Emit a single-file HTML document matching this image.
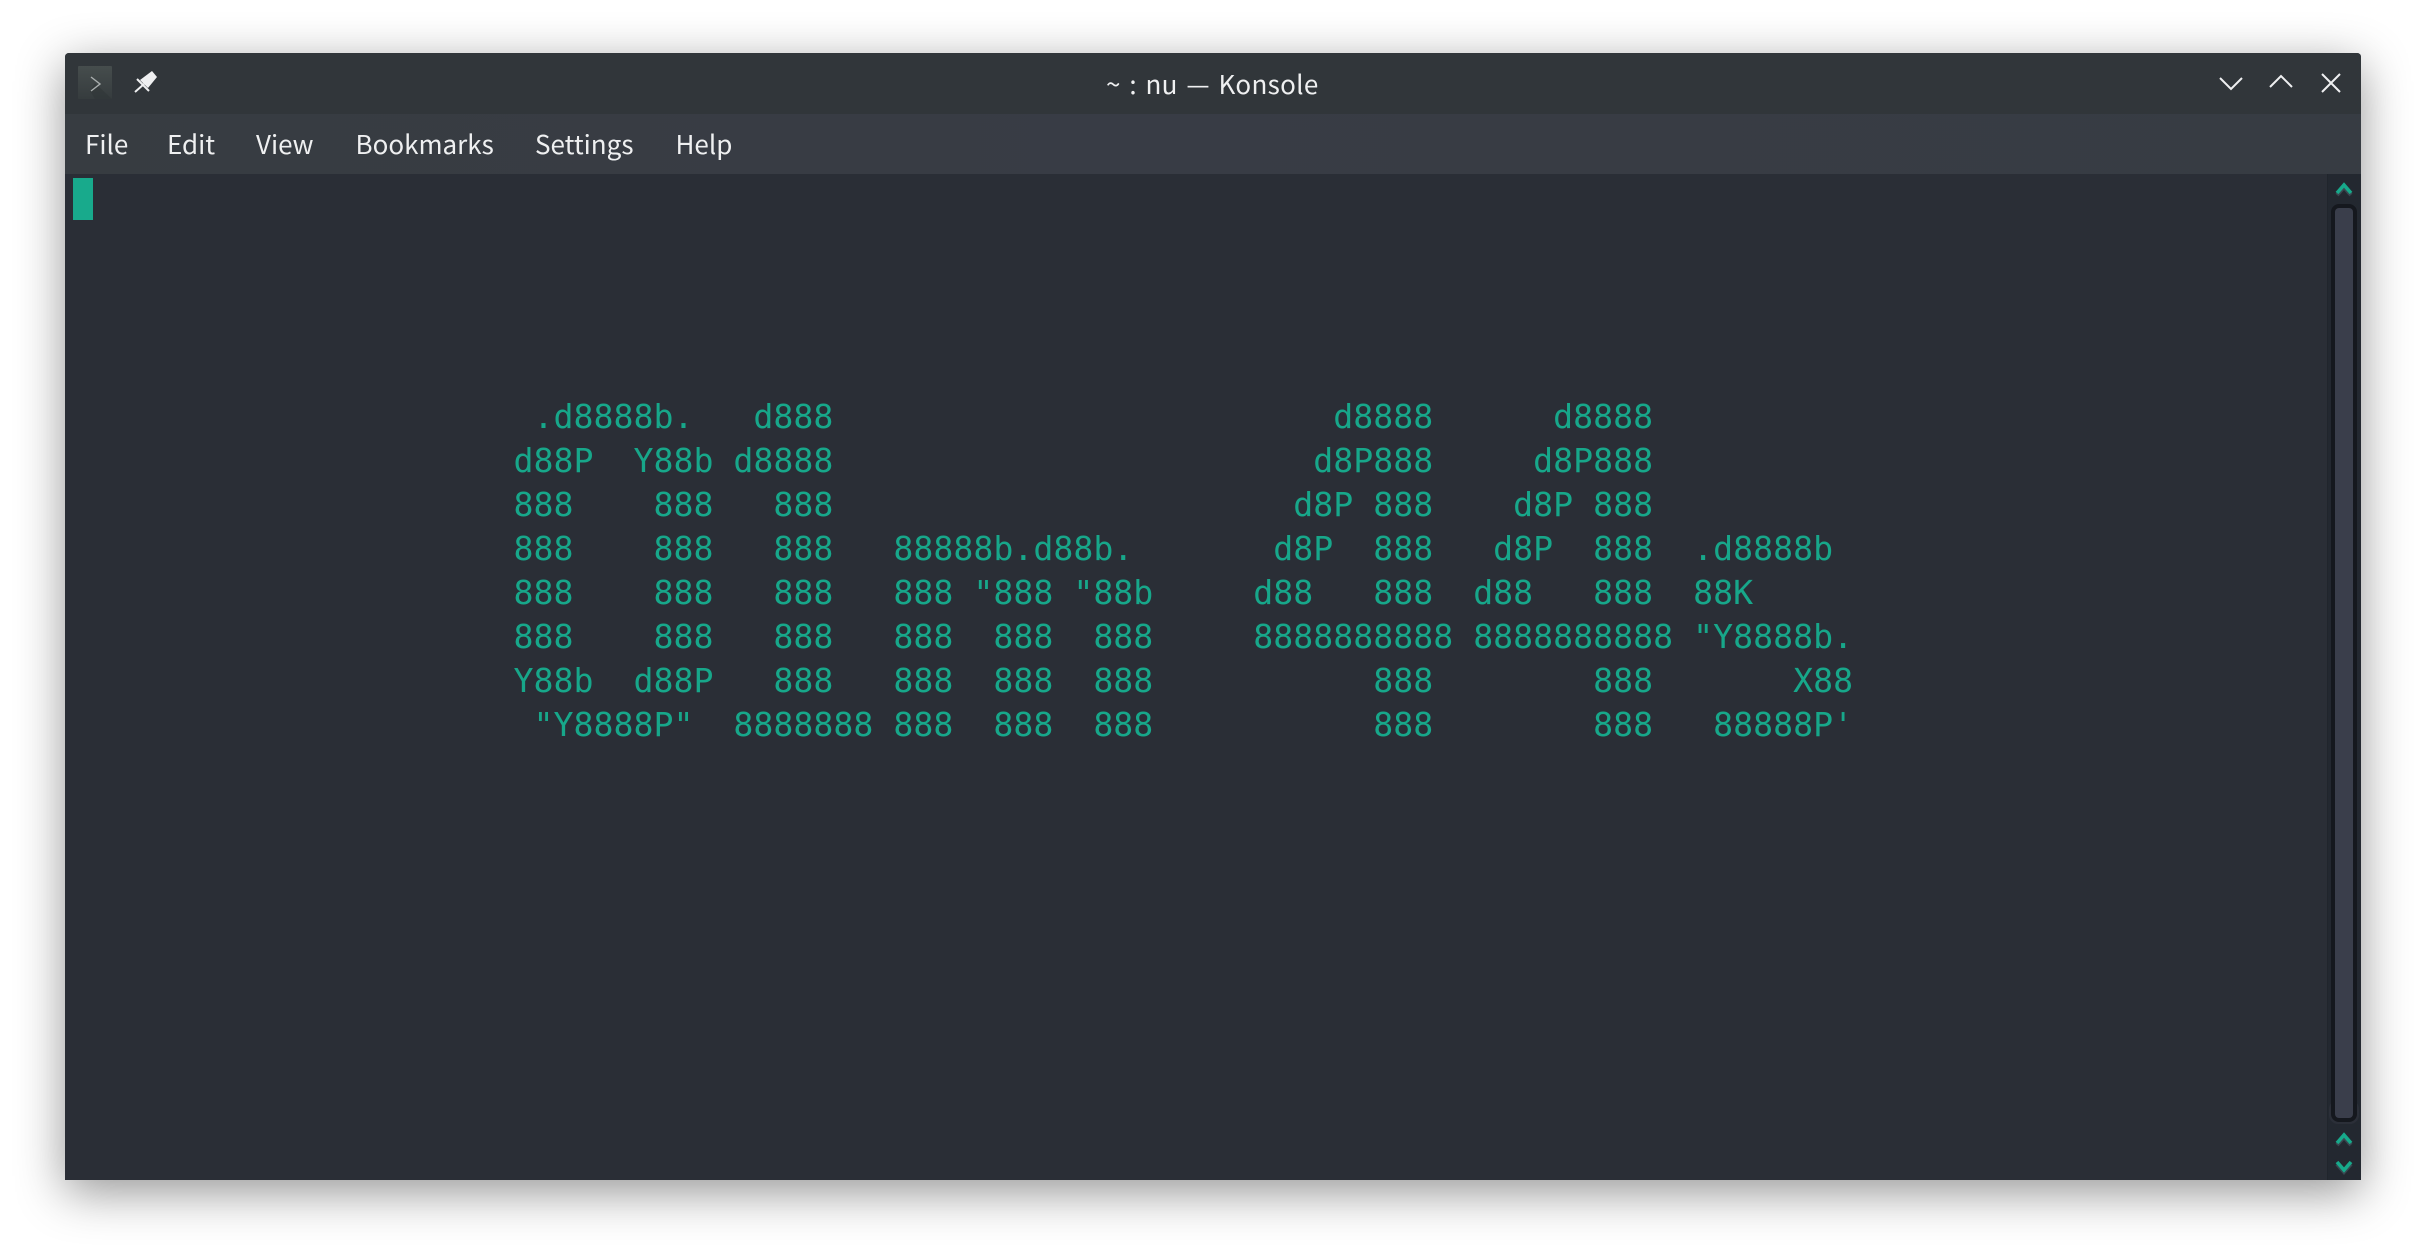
<!DOCTYPE html>
<html><head><meta charset="utf-8"><style>
html,body{margin:0;padding:0;width:2426px;height:1257px;background:#fff;overflow:hidden}
.win{position:absolute;left:65px;top:53px;width:2296px;height:1127px;background:#2a2e36;border-radius:4px 4px 0 0;box-shadow:0 12px 48px rgba(0,0,0,.42)}
.tb{position:absolute;left:0;top:0;width:2296px;height:61px;background:#31363a;border-radius:4px 4px 0 0}
.mb{position:absolute;left:0;top:61px;width:2296px;height:60px;background:linear-gradient(90deg,#373c41 0%,#383c45 45%,#373c43 100%)}
.ui{position:absolute;font-family:"Noto Sans CJK JP","Liberation Sans",sans-serif;font-size:26px;line-height:36px;color:#eff0f1;white-space:pre}
pre{position:absolute;left:513.500px;top:395px;margin:0;font-family:"DejaVu Sans Mono","Liberation Mono",monospace;font-size:33.2px;line-height:44px;color:#17a78a;letter-spacing:.013px}
svg{position:absolute;left:0;top:0}
</style></head><body>
<div class="win"><div class="tb"></div><div class="mb"></div></div>
<div style="position:absolute;left:73px;top:178px;width:20px;height:42px;background:#18aa8c"></div>
<div class="ui" style="left:85px;top:126px">File</div>
<div class="ui" style="left:167px;top:126px">Edit</div>
<div class="ui" style="left:256px;top:126px">View</div>
<div class="ui" style="left:355.500px;top:126px">Bookmarks</div>
<div class="ui" style="left:535px;top:126px">Settings</div>
<div class="ui" style="left:675.500px;top:126px">Help</div>
<div class="ui" style="left:1106px;top:66px;letter-spacing:.3px;word-spacing:2.5px">~ : nu — Konsole</div>
<pre> .d8888b.   d888                         d8888      d8888
d88P  Y88b d8888                        d8P888     d8P888
888    888   888                       d8P 888    d8P 888
888    888   888   88888b.d88b.       d8P  888   d8P  888  .d8888b
888    888   888   888 "888 "88b     d88   888  d88   888  88K
888    888   888   888  888  888     8888888888 8888888888 "Y8888b.
Y88b  d88P   888   888  888  888           888        888       X88
 "Y8888P"  8888888 888  888  888           888        888   88888P'</pre>
<svg width="2426" height="1257" viewBox="0 0 2426 1257" fill="none">
<defs><linearGradient id="g" x1="0" y1="0" x2="0" y2="1"><stop offset="0" stop-color="#464d4d"/><stop offset="1" stop-color="#363c3e"/></linearGradient></defs>
<rect x="78" y="66" width="34" height="33" rx="1" fill="url(#g)"/>
<path d="M95 83 L112 99 L95 99 L90 91Z" fill="#2f3536" opacity=".55"/>
<path d="M91 77 L100 84 L91 91" stroke="#a9aeae" stroke-width="1.4"/>
<path d="M140 80 L152 71 L157 77 L148 88 Z" fill="#eff0f1"/>
<path d="M137 79 L149 91" stroke="#eff0f1" stroke-width="2"/>
<path d="M135 92 L144 84" stroke="#eff0f1" stroke-width="2"/>
<g stroke="#eff0f1" stroke-width="2">
<path d="M2220 78 L2231 89 L2242 78"/>
<path d="M2270 87 L2281 76 L2292 87"/>
<path d="M2322 74 L2340 92 M2340 74 L2322 92"/>
</g>
<rect x="2327" y="174" width="34" height="1006" fill="#232830"/>
<rect x="2327" y="174" width="1" height="1006" fill="#20252c"/>
<rect x="2329" y="1100" width="30" height="24" rx="9" fill="#2b2f38"/>
<rect x="2331" y="204" width="26" height="918" rx="8" fill="#15181e"/>
<rect x="2335" y="208" width="18" height="910" rx="4" fill="#3a3e4b"/>
<g stroke="#3a4750" stroke-width="4" stroke-linejoin="miter">
<path d="M2337 195 L2344 187 L2351 195"/>
<path d="M2337 1145 L2344 1137 L2351 1145"/>
<path d="M2337 1164 L2344 1172 L2351 1164"/>
</g>
<g stroke="#17a98b" stroke-width="3.600" stroke-linejoin="miter">
<path d="M2337 193 L2344 185 L2351 193"/>
<path d="M2337 1143 L2344 1135 L2351 1143"/>
<path d="M2337 1162 L2344 1170 L2351 1162"/>
</g>
</svg>
</body></html>
